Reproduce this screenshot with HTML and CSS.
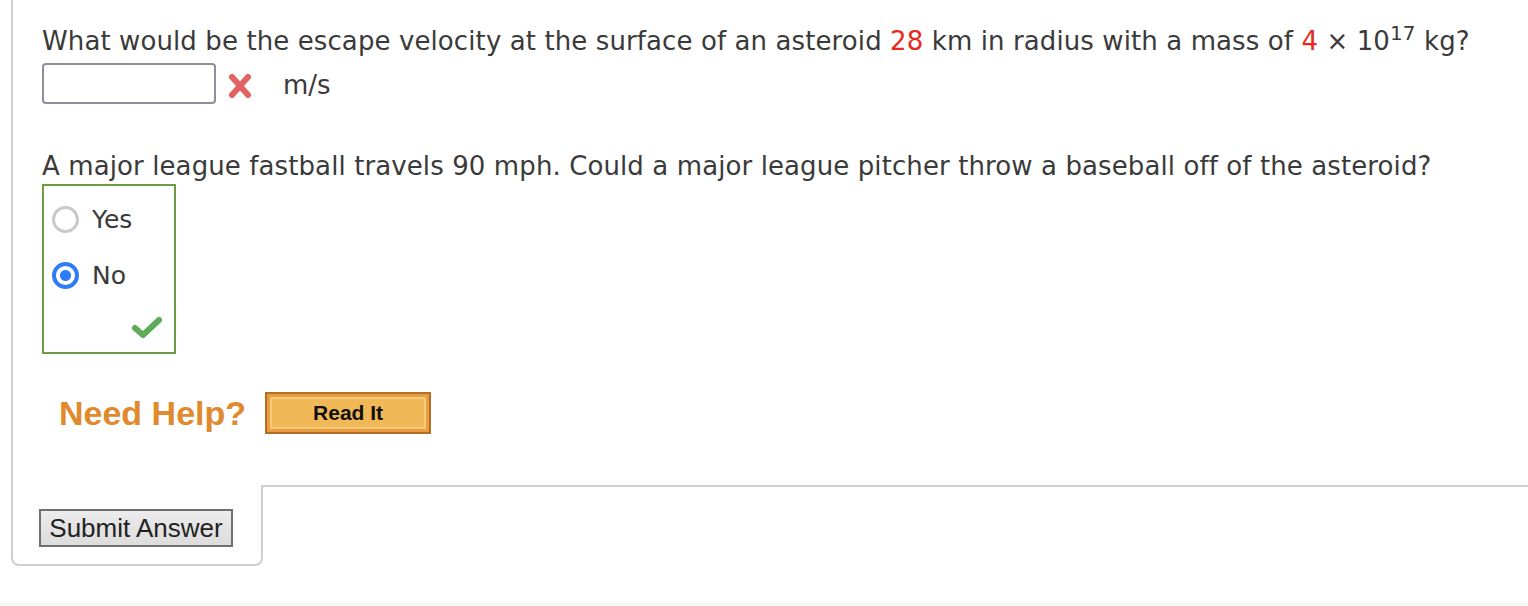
FILE: index.html
```html
<!DOCTYPE html>
<html lang="en">
<head>
    <meta charset="UTF-8">
    <title>Escape Velocity Question</title>
    <link rel="stylesheet" href="styles.css">
</head>
<body>
    <div class="page">
        <div class="question-area">
            <!-- Part 1: numeric answer -->
            <p class="question">What would be the escape velocity at the surface of an asteroid <span class="num">28</span> km in radius with a mass of <span class="num">4</span> &times; 10<sup>17</sup> kg?</p>
            <div class="answer-row">
                <input type="text" class="answer-input">
                <svg class="mark-wrong" width="26" height="28" viewBox="0 0 26 28">
                    <path d="M5 5 L21 23 M21 5 L5 23" stroke="#e36262" stroke-width="6" stroke-linecap="round" fill="none"/>
                </svg>
                <span class="unit">m/s</span>
            </div>

            <!-- Part 2: multiple choice -->
            <p class="question second">A major league fastball travels 90 mph. Could a major league pitcher throw a baseball off of the asteroid?</p>
            <div class="choices">
                <label class="choice"><input type="radio" name="pitch"> Yes</label>
                <label class="choice"><input type="radio" name="pitch" checked> No</label>
                <svg class="mark-right" width="30" height="24" viewBox="0 0 30 24">
                    <path d="M3 13 L11 20 L27 5" stroke="#5eab58" stroke-width="6" stroke-linecap="round" stroke-linejoin="round" fill="none"/>
                </svg>
            </div>

            <div class="help-row">
                <span class="need-help">Need Help?</span>
                <button class="read-it"><span>Read It</span></button>
            </div>
        </div>

        <div class="footer">
            <div class="submit-cell">
                <button class="submit">Submit Answer</button>
            </div>
            <div class="footer-rest"></div>
        </div>
    </div>
    <div class="bottom-band"></div>
</body>
</html>
```

FILE: styles.css
```css
body {
    margin: 0;
    background: #fff;
    font-family: "DejaVu Sans", Verdana, sans-serif;
    color: #3a3a3a;
}

.page {
    padding-left: 11px;
    height: 602px;
}

.question-area {
    border-left: 2px solid #cfcfcf;
    padding: 24px 0 0 29px;
    height: 485px;
    box-sizing: border-box;
}

.question {
    margin: 0;
    font-size: 26px;
    letter-spacing: 0.1px;
    line-height: 34px;
}

.question sup {
    font-size: 20px;
    line-height: 0;
    vertical-align: 10px;
}

.num {
    color: #e8291c;
}

.answer-row {
    display: flex;
    align-items: center;
    margin-top: 5px;
    height: 41px;
}

.answer-input {
    width: 174px;
    height: 41px;
    box-sizing: border-box;
    border: 2px solid #8f8e9a;
    border-radius: 4px;
    margin: 0;
}

.mark-wrong {
    margin-left: 11px;
    margin-top: 4px;
}

.unit {
    font-size: 26px;
    margin-left: 30px;
    margin-top: 2px;
}

.second {
    margin-top: 45px;
}

.choices {
    position: relative;
    width: 134px;
    height: 170px;
    box-sizing: border-box;
    border: 2px solid #6d9c42;
    margin-top: 1px;
    padding-top: 5px;
}

.choice {
    display: flex;
    align-items: center;
    height: 56px;
    font-size: 25px;
    padding-left: 8px;
}

.choice input {
    appearance: none;
    width: 27px;
    height: 27px;
    margin: 0 13px 0 0;
    border: 3px solid #c9c9cd;
    border-radius: 50%;
    box-sizing: border-box;
    background: #fff;
}

.choice input:checked {
    border: 4px solid #2e7cf6;
    background: radial-gradient(circle, #2e7cf6 0 5px, #fff 6px);
}

.mark-right {
    position: absolute;
    right: 12px;
    bottom: 13px;
}

.help-row {
    display: flex;
    align-items: center;
    margin-top: 38px;
    padding-left: 17px;
}

.need-help {
    font-family: "Liberation Sans", Arial, sans-serif;
    font-weight: bold;
    font-size: 34px;
    color: #e0892d;
}

.read-it {
    margin-left: 19px;
    width: 166px;
    height: 42px;
    padding: 3px;
    border: 2px solid #b06e27;
    background: #e89b3f;
    box-sizing: border-box;
    cursor: pointer;
}

.read-it span {
    display: block;
    height: 100%;
    box-sizing: border-box;
    border: 2px solid #f6cc7c;
    background: #f1b857;
    font-family: "Liberation Sans", Arial, sans-serif;
    font-weight: bold;
    font-size: 21px;
    line-height: 28px;
    color: #111;
}

.footer {
    display: flex;
    height: 81px;
}

.submit-cell {
    width: 252px;
    box-sizing: border-box;
    border: 2px solid #cfcfcf;
    border-top: none;
    border-radius: 0 0 8px 8px;
    padding: 24px 0 0 26px;
}

.footer-rest {
    flex: 1;
    border-top: 2px solid #cfcfcf;
    border-top-left-radius: 3px;
    margin-left: -2px;
    border-left: 2px solid #cfcfcf;
    height: 10px;
}

.submit {
    font-family: "Liberation Sans", Arial, sans-serif;
    font-size: 26px;
    color: #222;
    width: 194px;
    height: 38px;
    padding: 0;
    border: 2px solid #6f6f6f;
    border-radius: 0;
    background: linear-gradient(#ececec, #dcdcdc);
}

.bottom-band {
    height: 4px;
    background: #f7f7f7;
}
```
